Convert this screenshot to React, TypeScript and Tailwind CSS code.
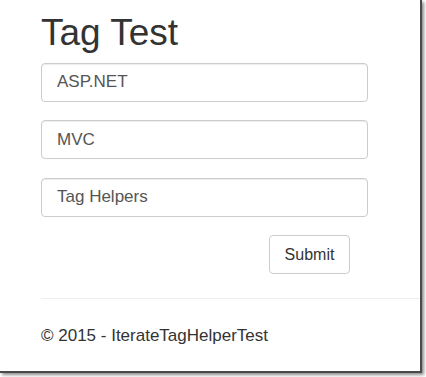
import React from 'react'

const fields = ['ASP.NET', 'MVC', 'Tag Helpers']

export default function App() {
  return (
    <div className="w-[426px] h-[377px] bg-white overflow-hidden" style={{ fontFamily: '"Liberation Sans", Arial, sans-serif' }}>
      {/* page frame with screenshot edge */}
      <div className="w-[422px] h-[373px] bg-white border-r-[2px] border-b-[2px] border-[#4a4a4a] shadow-[2px_2px_3px_rgba(0,0,0,0.45)]">
        <div className="pl-[41px] pt-[13px]">
          <h1 className="text-[37px] leading-[39.6px] text-[#333] m-0">Tag Test</h1>

          <form className="mt-[10px] w-[327px] flex flex-col gap-[18.5px]">
            {fields.map((f) => (
              <input
                key={f}
                defaultValue={f}
                className="h-[39px] w-full rounded-[4px] border border-[#ccc] px-[15px] text-[17px] text-[#555] bg-white shadow-[inset_0_1px_1px_rgba(0,0,0,0.075)] outline-none"
              />
            ))}
            <div className="flex justify-end pr-[18px]">
              <button
                type="button"
                className="h-[39px] w-[81px] rounded-[4px] border border-[#ccc] bg-white text-[16px] text-[#333]"
              >
                Submit
              </button>
            </div>
          </form>

          <hr className="mt-[24px] border-0 border-t border-[#eee]" />

          <footer className="mt-[26px] text-[17px] leading-[22px] text-[#333]">
            © 2015 - IterateTagHelperTest
          </footer>
        </div>
      </div>
    </div>
  )
}
